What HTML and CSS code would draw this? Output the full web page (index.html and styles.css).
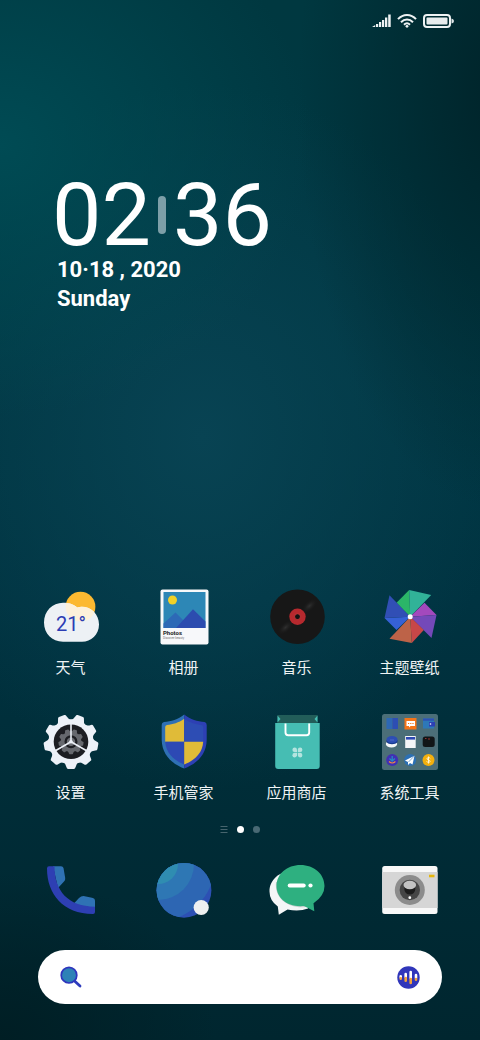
FILE: index.html
```html
<!DOCTYPE html>
<html lang="zh-CN">
<head>
<meta charset="utf-8">
<meta name="viewport" content="width=device-width, initial-scale=1">
<title>主屏幕</title>
<link rel="stylesheet" href="styles.css">
</head>
<body>
<div class="screen">
  <header class="status" aria-label="状态栏">
    <svg width="19" height="14" viewBox="0 0 19 14" fill="#eef3f4" aria-hidden="true">
      <path d="M0 13L3.200 11V13ZM4 10h2.200V13H4ZM7 8h2.200V13H7ZM10 6h2.200v7H10ZM13 3.500h2.300V13H13ZM16.200 0.500h2.500V13h-2.500Z"/>
    </svg>
    <svg width="20" height="14" viewBox="0 0 20 14" fill="none" stroke="#eef3f4" stroke-width="2" aria-hidden="true">
      <path d="M1 5.200C6 -0.400 14 -0.400 19 5.200M4 8.200C7.500 4.600 12.500 4.600 16 8.200M7 10.800C8.800 9 11.200 9 13 10.800"/>
      <circle cx="10" cy="12.300" r="1.400" fill="#eef3f4" stroke="none"/>
    </svg>
    <svg width="31" height="14" viewBox="0 0 31 14" aria-hidden="true">
      <rect x="1" y="1" width="26" height="12" rx="3" fill="none" stroke="#eef3f4" stroke-width="2"/>
      <rect x="3.500" y="3.500" width="21" height="7" rx="1" fill="#e6ebec"/>
      <path d="M28.500 4.500Q31 5 31 7T28.500 9.500Z" fill="#dfe6e8"/>
    </svg>
  </header>

  <section class="clock" aria-label="时钟">
    <div class="time"><span>02</span><i class="colon"></i><span>36</span></div>
    <div class="date">10·18 , 2020</div>
    <div class="date">Sunday</div>
  </section>

  <main class="apps">
    <a class="app" href="#weather">
      <svg class="icon" viewBox="0 0 56 56" aria-hidden="true">
        <circle cx="37.500" cy="17.700" r="14.900" fill="#fcb931"/>
        <path id="cloud" d="M20 13.700C27 13.700 32 16 34 18.400C46 15.500 56 24 56 35.500C56 46 48 52.700 39 52.700H20C9 52.700 1 44.500 1 33.500C1 22 9.500 13.700 20 13.700Z" fill="#edf1f5"/>
        <clipPath id="cloud-clip"><use href="#cloud"/></clipPath>
        <circle cx="37.500" cy="17.700" r="14.900" fill="#fdf1da" clip-path="url(#cloud-clip)"/>
        <text x="28" y="42" class="temp">21°</text>
      </svg>
      <span>天气</span>
    </a>
    <a class="app" href="#photos">
      <svg class="icon" viewBox="0 0 56 56" aria-hidden="true">
        <rect x="4.500" y="0.500" width="48" height="55" rx="2" fill="#f7f8fa"/>
        <path fill="#2d87b6" d="M7.500 3h42v36h-42z"/>
        <circle cx="16.500" cy="11" r="4.500" fill="#f1d127"/>
        <path fill="#2d69b6" d="M7.500 34.500L19.500 23.500L35 39H7.500Z"/>
        <path fill="#2c4caf" d="M20 39L37 20.300L49.500 32.500V39Z"/>
        <text x="7" y="46" class="photo-title">Photos</text>
        <text x="7" y="50" class="photo-note">Discover beauty</text>
      </svg>
      <span>相册</span>
    </a>
    <a class="app" href="#music">
      <svg class="icon" viewBox="0 0 56 56" aria-hidden="true">
        <defs><radialGradient id="glare"><stop offset="0" stop-color="#303030"/><stop offset="1" stop-color="#171717" stop-opacity="0"/></radialGradient></defs>
        <circle cx="28.500" cy="27.700" r="27.300" fill="#171717"/>
        <g transform="translate(28.500 27.700) rotate(-42)"><ellipse cx="16" rx="10" ry="5" fill="url(#glare)"/><ellipse cx="-16" rx="10" ry="5" fill="url(#glare)"/></g>
        <circle cx="28.500" cy="27.700" r="8.200" fill="#b6292e"/>
        <circle cx="28.500" cy="27.700" r="2.900" fill="#111" stroke="#d44" stroke-width=".7"/>
      </svg>
      <span>音乐</span>
    </a>
    <a class="app" href="#themes">
      <svg class="icon" viewBox="0 0 56 56" aria-hidden="true">
        <path fill="#2bb568" d="M28.200 27.700L14.500 13.700L27.200 1Z"/><path fill="#31b298" d="M28.200 27.700L27.200 1L49.200 6Z"/>
        <path fill="#a349bd" d="M28.200 27.700L42.500 13.700L54.500 26Z"/><path fill="#7449b9" d="M28.200 27.700L54.500 26L49.500 49Z"/>
        <path fill="#c74748" d="M28.200 27.700L41.800 41L29.800 54Z"/><path fill="#bd6348" d="M28.200 27.700L29.800 54L7.500 49.700Z"/>
        <path fill="#3661d6" d="M28.200 27.700L14.500 41L2.500 29Z"/><path fill="#314fb5" d="M28.200 27.700L2.500 29L7.500 6.300Z"/>
        <circle cx="28.200" cy="27.700" r="2.500" fill="#fff"/>
      </svg>
      <span>主题壁纸</span>
    </a>
    <a class="app" href="#settings">
      <svg class="icon" viewBox="0 0 56 56" aria-hidden="true">
        <defs><path id="tooth" d="M-8 -20Q-5.200 -22 -4.500 -25.500Q-4.200 -27.300 -2.800 -27.300H2.800Q4.200 -27.300 4.500 -25.500Q5.200 -22 8 -20Z"/>
        <g id="gear"><circle r="22.500"/><use href="#tooth" transform="rotate(20)"/><use href="#tooth" transform="rotate(60)"/><use href="#tooth" transform="rotate(100)"/><use href="#tooth" transform="rotate(140)"/><use href="#tooth" transform="rotate(180)"/><use href="#tooth" transform="rotate(220)"/><use href="#tooth" transform="rotate(260)"/><use href="#tooth" transform="rotate(300)"/><use href="#tooth" transform="rotate(340)"/></g></defs>
        <g transform="translate(28 27.700)">
          <use href="#gear" fill="#edf1f8"/>
          <circle r="17.300" fill="#1c1d22"/>
          <use href="#gear" fill="#66686e" transform="scale(.46)"/>
          <circle r="6.500" fill="#1c1d22"/>
          <circle r="4.200" fill="#6c6e74"/>
          <path d="M0 0V-18M0 0L15.600 9M0 0L-15.600 9" stroke="#edf1f8" stroke-width="1.600"/>
          <circle r="1.800" fill="#edf1f8"/>
        </g>
      </svg>
      <span>设置</span>
    </a>
    <a class="app" href="#manager">
      <svg class="icon" viewBox="0 0 56 56" aria-hidden="true">
        <path fill="#2f70b5" d="M28.200 0.500C22 5.500 15 7.500 8 8Q5.700 8.500 5.700 11V26C6 40 15 49.500 28.200 54.500Z"/>
        <path fill="#2d40b4" d="M28.200 0.500C34.500 5.500 41.500 7.500 48.500 8Q50.700 8.500 50.700 11V26C50.400 40 41.500 49.500 28.200 54.500Z"/>
        <path fill="#e0bb38" d="M28.200 4.800C22.500 9 17 10.300 11 11Q9.200 11.300 9.200 13V27.700H28.200Z"/>
        <path fill="#2d49b4" d="M9.200 27.700H28.200V50.500C17 46 10 38.500 9.200 27.700Z"/>
        <path fill="#2d4db4" d="M28.200 4.800C34 9 39.500 10.300 45.500 11Q47.200 11.300 47.200 13V27.700H28.200Z"/>
        <path fill="#e0bb38" d="M28.200 27.700H47.200C46.500 38.500 39.500 46 28.200 50.500Z"/>
      </svg>
      <span>手机管家</span>
    </a>
    <a class="app" href="#store">
      <svg class="icon" viewBox="0 0 56 56" aria-hidden="true">
        <path fill="#225d59" d="M8.500 1h40v9h-40z"/>
        <path fill="#46bdb3" d="M8.500 1.500L11.500 5L8.500 8.500ZM48.500 1.500L45.500 5L48.500 8.500Z"/>
        <path fill="#46bdb3" d="M6.200 9H50.700V52Q50.700 55 47.700 55H9.200Q6.200 55 6.200 52Z"/>
        <path d="M16.500 9.500V18.500Q16.500 21.200 19.200 21.200H37.500Q40.200 21.200 40.200 18.500V9.500" fill="none" stroke="#fff" stroke-width="1.900"/>
        <g fill="#b4e4df"><path d="M28 38H25.500A2.300 2.300 0 1 1 28 35.500Z"/><path d="M28.800 38V35.500A2.300 2.300 0 1 1 31.300 38Z"/><path d="M28 38.800V41.300A2.300 2.300 0 1 1 25.500 38.800Z"/><path d="M28.800 38.800H31.300A2.300 2.300 0 1 1 28.800 41.300Z"/></g>
      </svg>
      <span>应用商店</span>
    </a>
    <a class="app" href="#tools">
      <svg class="icon" viewBox="0 0 56 56" aria-hidden="true">
        <rect y="0" width="56" height="56" rx="2.500" fill="#4b6e78"/>
        <path fill="#2d68b4" d="M4.500 4h6v11h-6z"/><path fill="#2d4eb3" d="M10.500 4h5.500v11h-5.500z"/>
        <path fill="#f37519" d="M22.500 4h12v11.500h-12z"/><path fill="#fff" d="M24.500 7h8.500v5h-4.500l-1.500 1.500V12h-2.500z"/><path d="M26 9.500h1.200M28.200 9.500h1.200M30.400 9.500h1.200" stroke="#f37519"/>
        <path fill="#2d78b8" d="M41 4.500h11v10H41z"/><path fill="#2d50b4" d="M41 4.500h11v2.200H41z"/><path fill="#2d40b4" d="M47 8h6v4.500h-6z"/><circle cx="48.500" cy="10" r=".8" fill="#fff"/>
        <ellipse cx="9.500" cy="30" rx="5.700" ry="3.500" fill="#f4f6f7"/><path fill="#183b91" d="M4.500 26v2c2 3 9 3 11 0v-2z"/><ellipse cx="10" cy="25.500" rx="5.500" ry="3.400" fill="#2d4eb4"/><path d="M8 26h4" stroke="#5b77d0" stroke-width=".7"/>
        <path fill="#f5f6f8" d="M23.200 22h10.500v12H23.200z"/><path fill="#2d49b4" d="M24 23h9v2.600h-9z"/>
        <rect x="40.700" y="22.500" width="12" height="10.500" rx="2.500" fill="#111517"/><path d="M43 24.500h1.500M46 25h2" stroke="#97342f"/>
        <circle cx="10.200" cy="46" r="6" fill="#4030b4"/><path d="M10.200 42v5M7.500 44.500l2.700 2.700L12.900 44.500" fill="none" stroke="#248bc3" stroke-width="1.300"/><path d="M7 47.500q3.200 3 6.400 0" fill="none" stroke="#f08c41" stroke-width="1.100"/>
        <circle cx="28.200" cy="46" r="6" fill="#2c70b4"/><path fill="#fff" d="M32.500 41.800L23 46.500l3 1.500v3l2-2 2.500 1.500z"/><path d="M32.500 41.800L26.500 48" stroke="#4a83bc" stroke-width=".7"/>
        <circle cx="46.500" cy="46" r="6" fill="#f3af0d"/><path d="M48.300 44.500C47.800 43.200 44.900 43.300 45 44.800C45.100 46.300 48.200 45.800 48.100 47.400C47.900 48.800 45.200 48.700 44.700 47.400M46.500 42.500v7" fill="none" stroke="#fff2cf" stroke-width="1"/>
      </svg>
      <span>系统工具</span>
    </a>
  </main>

  <nav class="pages" aria-label="页面">
    <svg width="8" height="8" viewBox="0 0 8 8" stroke="#47656e" aria-hidden="true"><path d="M0.500 1.500h7M0.500 4.500h7M0.500 7.500h7"/></svg>
    <i class="dot active"></i>
    <i class="dot"></i>
  </nav>

  <nav class="dock" aria-label="常用应用">
    <a class="app" href="#phone" aria-label="电话">
      <svg class="icon" viewBox="0 0 56 56" aria-hidden="true">
        <path fill="#2f72b4" d="M10 4.300H18Q20 4.300 20.500 6L22.200 16Q22.500 18 21 19.500L15 26ZM30 42.500L36 36Q38 34 40.500 34L49 35.700Q52 36.300 52 39V46Z"/>
        <path fill="#2e3fb3" d="M6 4.300H11.500C11.500 29 25 44.500 52 44.700V50Q52 52 50 52C20 52 4 32 4 6.500Q4 4.300 6 4.300Z"/>
      </svg>
    </a>
    <a class="app" href="#browser" aria-label="浏览器">
      <svg class="icon" viewBox="0 0 56 56" aria-hidden="true">
        <defs><clipPath id="globe"><circle cx="28" cy="28.300" r="27.400"/></clipPath></defs>
        <g clip-path="url(#globe)"><path fill="#2d50b4" d="M0 0h56v56H0z"/><circle cx="2" cy="2" r="57" fill="#2d66b3"/><circle cx="2" cy="2" r="36" fill="#2e77b4"/><circle cx="2" cy="2" r="20" fill="#2f8db1"/></g>
        <circle cx="45.200" cy="45.500" r="7.600" fill="#eef0f0"/>
      </svg>
    </a>
    <a class="app" href="#messages" aria-label="信息">
      <svg class="icon" viewBox="0 0 56 56" aria-hidden="true">
        <path fill="#f4f6f7" d="M24 9C10 9 0.500 18 0.500 29.500Q0.500 38.500 8.800 44.500L9.800 52.700L18.500 47.500Q30 50 39 46.500V9Z"/>
        <path fill="#a9b5b2" opacity=".6" d="M7 20C5 37 20 47 37 45L42 42L20 20Z"/>
        <path fill="#2eb080" d="M31.500 3C45 3 55.500 12 55.500 24Q55.500 34 44.500 41.300L45.300 49.300L35 44C18 45.500 7.500 36 7.500 24C7.500 12 18 3 31.500 3Z"/>
        <path d="M20.700 23.500H34.700" stroke="#fff" stroke-width="4" stroke-linecap="round"/><circle cx="41.500" cy="23.500" r="2.100" fill="#fff"/>
      </svg>
    </a>
    <a class="app" href="#camera" aria-label="相机">
      <svg class="icon" viewBox="0 0 56 56" aria-hidden="true">
        <rect x="0.200" y="4" width="55.300" height="48" rx="2.500" fill="#f8f8f8"/>
        <path fill="#d6d6d6" d="M0.200 10h55.300v36H0.200z"/>
        <circle cx="27.800" cy="28" r="15" fill="#8c8c8c"/><circle cx="27.800" cy="28" r="10.200" fill="#454545"/><circle cx="27.800" cy="27" r="5.500" fill="#1c1c1c"/>
        <ellipse cx="27.800" cy="23" rx="6.300" ry="4.200" fill="#c3c3c3"/><circle cx="27.800" cy="35.700" r="1.400" fill="#fff"/>
        <path fill="#e6b70e" d="M47 12.700h5.500v2.600H47z"/>
      </svg>
    </a>
  </nav>

  <form class="search" role="search">
    <svg width="22" height="22" viewBox="0 0 22 22" aria-hidden="true"><path d="M14 14.500L20 20" stroke="#2e3cbd" stroke-width="2.800" stroke-linecap="round"/><circle cx="9" cy="9.200" r="7.800" fill="#2d82b7" stroke="#2e35bd" stroke-width="1.700"/></svg>
    <input type="search" aria-label="搜索">
    <button type="button" aria-label="语音搜索">
      <svg width="23" height="23" viewBox="0 0 23 23" aria-hidden="true"><circle cx="11.500" cy="11.500" r="11.200" fill="#3036ba"/>
        <g stroke-width="2.600" stroke="#fff" stroke-linecap="round"><path d="M3.700 10.200v1M8.700 8v3M13.700 6v6M19 9v3"/></g>
        <g stroke-width="2.600" stroke="#f3a13a" stroke-linecap="round"><path d="M3.700 12.200v.5M8.700 12v2.800M13.700 13v4M19 13v.8"/></g>
      </svg>
    </button>
  </form>
</div>
</body>
</html>
```
FILE: styles.css
```css
* { box-sizing: border-box; }

body {
  margin: 0;
  color: #fff;
  background: #002b35;
  font-family: Roboto, "Noto Sans CJK SC", sans-serif;
}

.screen {
  min-height: 100vh;
  display: flex;
  flex-direction: column;
  padding-bottom: 36px;
  background:
    radial-gradient(ellipse 65% 26% at 0% 14%, #004b54 0%, #004b5400 100%),
    radial-gradient(ellipse 42% 40% at 104% 9%, #00242a 0%, #00242a00 100%),
    radial-gradient(ellipse 64% 34% at 42% 42%, #084353 0%, #08435300 100%),
    radial-gradient(ellipse 45% 16% at 0% 100%, #001e24 0%, #001e2400 100%),
    linear-gradient(180deg, #003840 0%, #003844 35%, #003341 58%, #002d38 75%, #00262f 100%);
}

.status {
  display: flex;
  justify-content: flex-end;
  gap: 6px;
  padding: 14px 26px 0;
}

.clock { padding: 147px 52px 0; }

.time {
  display: flex;
  align-items: center;
  gap: 7px;
  font-size: 88px;
  line-height: 80px;
}

.colon {
  width: 8px;
  height: 38px;
  border-radius: 4px;
  background: #7d9fa8;
}

.date {
  padding-left: 5px;
  font-size: 22px;
  font-weight: 700;
  line-height: 29px;
}

.apps,
.dock {
  display: grid;
  grid-template-columns: repeat(4, 1fr);
  padding: 0 14px;
}

.apps {
  margin-top: auto;
  row-gap: 36px;
}

.app {
  display: flex;
  flex-direction: column;
  align-items: center;
  gap: 13px;
  color: #f0f4f5;
  font-size: 15px;
  line-height: 20px;
  text-decoration: none;
}

.icon {
  display: block;
  width: 56px;
  height: 56px;
}

.temp {
  fill: #2c3db4;
  font-size: 20px;
  text-anchor: middle;
}

.photo-title {
  fill: #222;
  font-size: 6px;
  font-weight: 700;
}

.photo-note {
  fill: #777;
  font-size: 3px;
}

.pages {
  display: flex;
  align-items: center;
  justify-content: center;
  gap: 9px;
  margin: 22px 0 29px;
}

.dot {
  width: 7px;
  height: 7px;
  border-radius: 50%;
  background: #496974;
}

.dot.active { background: #fff; }

.search {
  display: flex;
  align-items: center;
  height: 54px;
  margin: 32px 38px 0;
  padding: 0 22px;
  border-radius: 27px;
  background: #fff;
}

.search input {
  flex: 1;
  min-width: 0;
  border: 0;
  outline: 0;
  background: transparent;
  font-size: 16px;
}

.search button {
  display: flex;
  padding: 0;
  border: 0;
  background: transparent;
}
```
